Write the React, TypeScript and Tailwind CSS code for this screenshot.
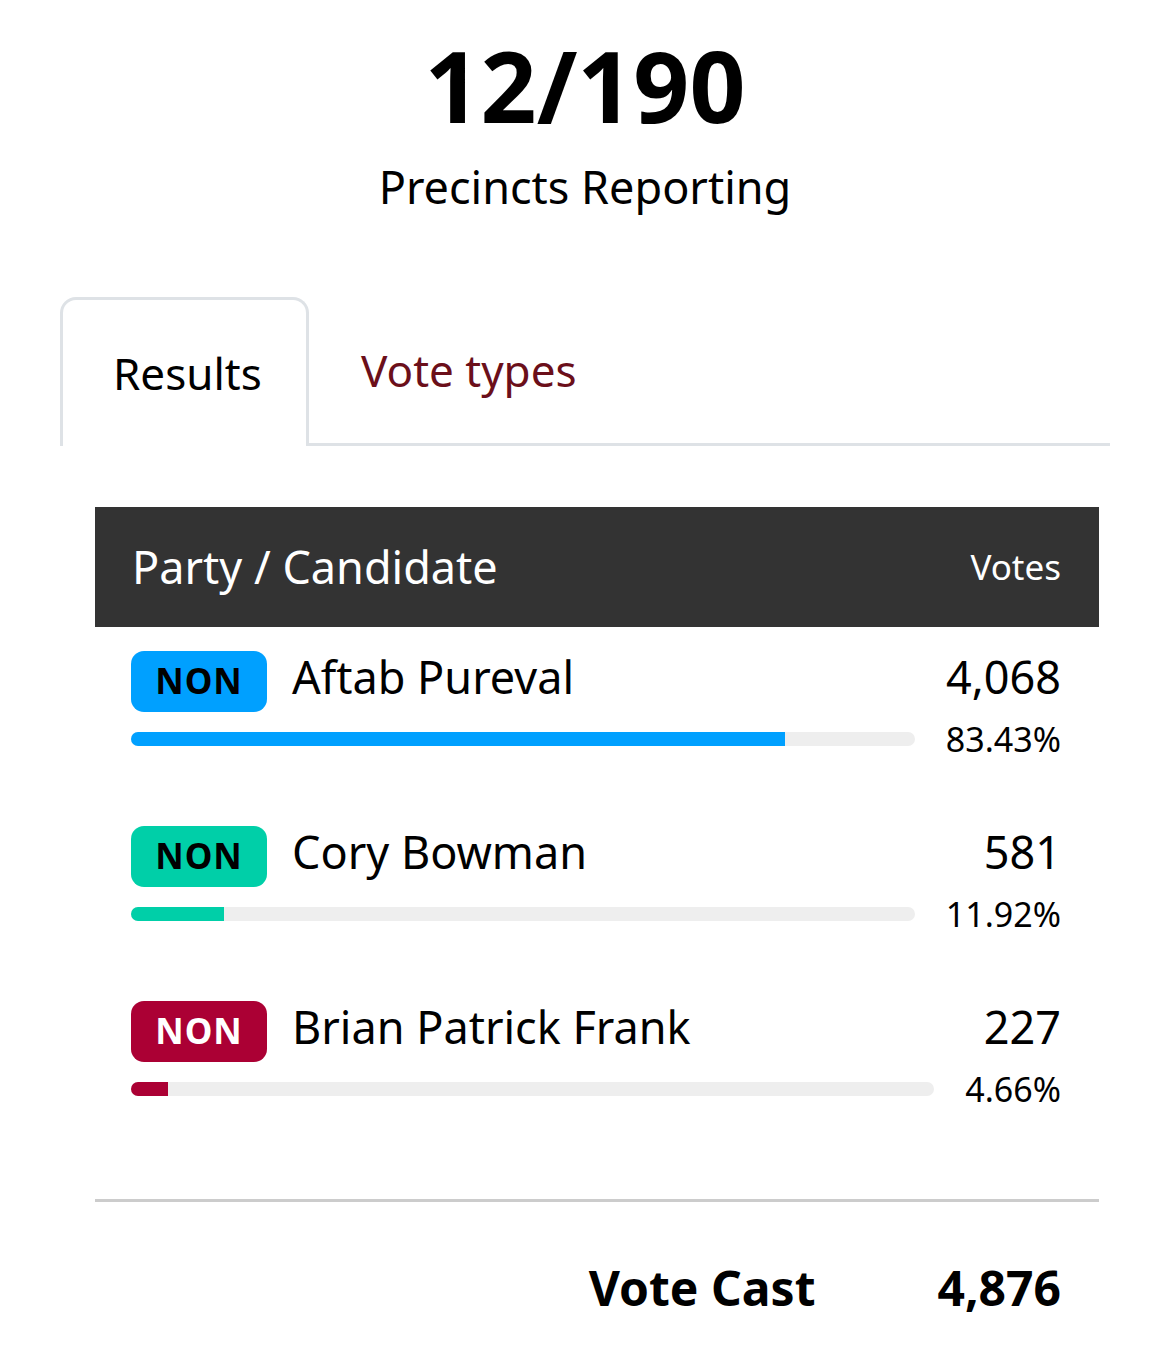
const CANDIDATES = [
  { name: "Aftab Pureval", votes: "4,068", pct: 83.43, color: "bg-[#00a0ff]", text: "text-black" },
  { name: "Cory Bowman", votes: "581", pct: 11.92, color: "bg-[#00cfa8]", text: "text-black" },
  { name: "Brian Patrick Frank", votes: "227", pct: 4.66, color: "bg-[#ab0034]", text: "text-white" },
];

export default function App() {
  return (
    <div className="w-[1170px] min-h-[1360px] bg-white text-black font-['Noto_Sans',sans-serif]">
      {/* Precinct counter */}
      <div className="flex flex-col items-center pt-[25px]">
        <div className="text-[98px] font-bold leading-[120px]">12/190</div>
        <div className="text-[45px] leading-[60px] mt-[12px]">Precincts Reporting</div>
      </div>

      {/* Tabs */}
      <div className="mt-[80px] ml-[60px] mr-[60px] flex border-b-[3px] border-[#dee2e6]">
        <div className="-mb-[3px] h-[149px] w-[249px] flex items-center pl-[50px] border-[3px] border-b-0 border-[#dee2e6] rounded-t-[16px] bg-white text-[44px]">
          Results
        </div>
        <div className="flex items-center pl-[52px] text-[44px] text-[#6b0f1a]">Vote types</div>
      </div>

      {/* Results table */}
      <div className="mt-[61px] ml-[95px] w-[1004px]">
        <div className="h-[120px] bg-[#333333] flex items-center justify-between pl-[37px] pr-[38px] text-white">
          <span className="text-[45px]">Party / Candidate</span>
          <span className="text-[35px]">Votes</span>
        </div>

        <div className="pl-[36px] pr-[38px] pt-[24px]">
          {CANDIDATES.map((c) => (
            <div key={c.name} className="h-[175px]">
              <div className="flex items-start h-[61px]">
                <div
                  className={`w-[136px] h-[61px] rounded-[13px] flex items-center justify-center text-[35px] font-bold tracking-[1px] ${c.color} ${c.text}`}
                >
                  NON
                </div>
                <span className="ml-[25px] mt-[3px] text-[45px] leading-none">{c.name}</span>
                <span className="ml-auto mt-[3px] text-[45px] leading-none">{c.votes}</span>
              </div>
              <div className="mt-[20px] h-[14px] flex items-center">
                <div className="flex-1 h-[14px] rounded-full bg-[#eeeeee] overflow-hidden">
                  <div className={`h-full ${c.color}`} style={{ width: `${c.pct}%` }} />
                </div>
                <span className="ml-[31px] text-[34px] leading-none">{c.pct.toFixed(2)}%</span>
              </div>
            </div>
          ))}
        </div>

        <div className="mt-[23px] border-t-[3px] border-[#cccccc]" />

        <div className="flex justify-end items-center pr-[38px] pt-[50px] text-[48px] font-bold">
          <span>Vote Cast</span>
          <span className="ml-[122px]">4,876</span>
        </div>
      </div>
    </div>
  );
}
